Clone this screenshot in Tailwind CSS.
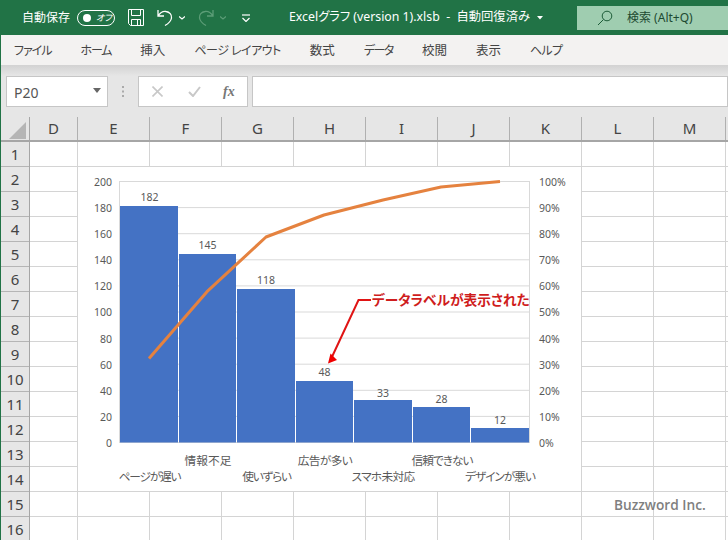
<!DOCTYPE html>
<html lang="ja">
<head>
<meta charset="utf-8">
<script src="https://cdn.jsdelivr.net/npm/@tailwindcss/browser@4"></script>
</head>
<body class="m-0 overflow-hidden bg-white">
<div class="relative flex h-[540px] w-[728px] flex-col overflow-hidden border-l border-[#217346] font-['Noto_Sans','Noto_Sans_CJK_JP',sans-serif] text-[#444] [font-feature-settings:'palt']">

  <!-- Title bar -->
  <div class="flex h-[35px] shrink-0 items-center bg-[#217346] pl-[21px] text-[12px] text-white">
    <span class="w-[55px]">自動保存</span>
    <div class="flex h-[16px] w-[38px] items-center rounded-full border-[1.5px] border-white pl-[5px]">
      <span class="h-[8px] w-[8px] rounded-full bg-white"></span>
      <span class="ml-[5px] text-[9px] leading-none italic">オフ</span>
    </div>
    <svg class="ml-[13px]" width="16" height="17" viewBox="0 0 16 17" fill="none" stroke="#fff" stroke-width="1"><path d="M.5.5h15v16H2.5l-2-2zM3.5.5v6h9v-6M3.5 16.500v-6h9v6M9.500 11v5"/></svg>
    <svg class="ml-[13px]" width="16" height="18" viewBox="0 0 16 18" fill="none" stroke="#fff" stroke-width="1.300"><path d="M1 1v6h6M1 7c2-3 5-5 8-4.500 3.500.5 6 3 5.500 6.500-.5 3-3 5.500-6.500 7.500"/></svg>
    <svg class="ml-[6px]" width="6" height="4" viewBox="0 0 6 4" fill="none" stroke="#fff" stroke-width="1.200"><path d="M0 .5l3 2.500L6 .5"/></svg>
    <svg class="ml-[13px]" width="16" height="18" viewBox="0 0 16 18" fill="none" stroke="#5c9d77" stroke-width="1.300"><path d="M15 1v6H9M15 7c-2-3-5-5-8-4.500C3.500 3 1 5.500 1.500 9c.5 3 3 5.500 6.500 7.500"/></svg>
    <svg class="ml-[6px]" width="6" height="4" viewBox="0 0 6 4" fill="none" stroke="#5c9d77" stroke-width="1.200"><path d="M0 .5l3 2.500L6 .5"/></svg>
    <svg class="ml-[16px]" width="8" height="8" viewBox="0 0 8 8" fill="none" stroke="#fff" stroke-width="1.200"><path d="M0 1h8"/><path d="M.5 4l3.500 3.500L7.500 4" /></svg>
    <span class="ml-[39px] w-[248px] text-[12.3px] whitespace-pre">Excelグラフ (version 1).xlsb  -  自動回復済み</span>
    <svg width="6" height="4" viewBox="0 0 6 4" fill="#fff"><path d="M0 0h6L3 3.500z"/></svg>
    <div class="mt-[1px] ml-[34px] flex h-[24px] flex-1 items-center bg-[#9fcdb0] pl-[20px] text-[#1d4a30]">
      <svg width="16" height="16" viewBox="0 0 16 16" fill="none" stroke="#1d5c38" stroke-width="1"><circle cx="10" cy="6" r="4.800"/><path d="M6.500 9.500L1 15"/></svg>
      <span class="ml-[14px]">検索 (Alt+Q)</span>
    </div>
  </div>

  <!-- Ribbon tabs -->
  <div class="flex h-[30px] shrink-0 items-center gap-[29px] bg-[#f3f2f1] pt-[2px] pl-[13px] text-[12px] text-[#444]">
    <span class="tracking-[-1px]">ファイル</span>
    <span class="tracking-[-1.2px]">ホーム</span>
    <span class="text-[12.5px]">挿入</span>
    <span class="tracking-[-0.5px]">ページ レイアウト</span>
    <span class="text-[12.5px]">数式</span>
    <span class="tracking-[-1.5px]">データ</span>
    <span class="text-[12.5px]">校閲</span>
    <span class="text-[12.5px]">表示</span>
    <span class="tracking-[-0.7px]">ヘルプ</span>
  </div>
  <div class="h-[11px] shrink-0 bg-gradient-to-b from-[#d2d2d2] to-[#e6e6e6]"></div>

  <!-- Formula bar -->
  <div class="flex h-[41px] shrink-0 items-start gap-[4px] bg-[#e6e6e6] pl-[5px]">
    <div class="flex h-[31px] w-[102px] items-center justify-between border border-[#c6c6c6] bg-white pt-[2px] pr-[6px] pl-[7px] text-[14px] text-[#555]">
      <span>P20</span>
      <svg class="mb-[4px]" width="8" height="5" viewBox="0 0 8 5" fill="#666"><path d="M0 0h8L4 5z"/></svg>
    </div>
    <div class="flex h-[31px] w-[22px] items-center justify-center">
      <svg width="2" height="11" viewBox="0 0 2 11" fill="#aaa"><path d="M0 0h2v2H0zM0 4.500h2v2H0zM0 9h2v2H0z"/></svg>
    </div>
    <div class="flex h-[31px] w-[110px] items-center border border-[#c6c6c6] bg-white pl-[13px]">
      <svg width="11" height="11" viewBox="0 0 11 11" fill="none" stroke="#c8c8c8" stroke-width="1.600"><path d="M.5.500l10 10M10.500.500l-10 10"/></svg>
      <svg class="ml-[25px]" width="13" height="11" viewBox="0 0 13 11" fill="none" stroke="#c8c8c8" stroke-width="2"><path d="M1 6l4 4 7-9"/></svg>
      <span class="ml-[22px] font-['Liberation_Serif',serif] text-[14px] leading-none font-bold text-[#777] italic">fx</span>
    </div>
    <div class="h-[31px] flex-1 border border-[#c6c6c6] bg-white"></div>
  </div>

  <!-- Column headers -->
  <div class="flex h-[25px] shrink-0 border-b-2 border-[#a6a6a6] bg-[#e6e6e6] text-center text-[15px] leading-[23px] text-[#444]">
    <div class="relative w-[29px] shrink-0 border-r border-[#a6a6a6]">
      <svg class="absolute top-[5px] left-[8px]" width="17" height="17" viewBox="0 0 17 17" fill="#b5b5b5"><path d="M17 0v17H0z"/></svg>
    </div>
    <div class="w-[48px] shrink-0 border-r border-[#b0b0b0]">D</div>
    <div class="w-[72px] shrink-0 border-r border-[#b0b0b0]">E</div>
    <div class="w-[72px] shrink-0 border-r border-[#b0b0b0]">F</div>
    <div class="w-[72px] shrink-0 border-r border-[#b0b0b0]">G</div>
    <div class="w-[72px] shrink-0 border-r border-[#b0b0b0]">H</div>
    <div class="w-[72px] shrink-0 border-r border-[#b0b0b0]">I</div>
    <div class="w-[72px] shrink-0 border-r border-[#b0b0b0]">J</div>
    <div class="w-[72px] shrink-0 border-r border-[#b0b0b0]">K</div>
    <div class="w-[72px] shrink-0 border-r border-[#b0b0b0]">L</div>
    <div class="w-[72px] shrink-0 border-r border-[#b0b0b0]">M</div>
    <div class="flex-1"></div>
  </div>

  <!-- Sheet -->
  <div class="flex min-h-0 flex-1">
    <div class="flex w-[29px] shrink-0 flex-col border-r border-[#a6a6a6] bg-[#e6e6e6] text-center text-[15px] leading-[24px] text-[#444]">
      <div class="h-[25px] shrink-0 border-b border-[#b5b5b5]">1</div>
      <div class="h-[25px] shrink-0 border-b border-[#b5b5b5]">2</div>
      <div class="h-[25px] shrink-0 border-b border-[#b5b5b5]">3</div>
      <div class="h-[25px] shrink-0 border-b border-[#b5b5b5]">4</div>
      <div class="h-[25px] shrink-0 border-b border-[#b5b5b5]">5</div>
      <div class="h-[25px] shrink-0 border-b border-[#b5b5b5]">6</div>
      <div class="h-[25px] shrink-0 border-b border-[#b5b5b5]">7</div>
      <div class="h-[25px] shrink-0 border-b border-[#b5b5b5]">8</div>
      <div class="h-[25px] shrink-0 border-b border-[#b5b5b5]">9</div>
      <div class="h-[25px] shrink-0 border-b border-[#b5b5b5]">10</div>
      <div class="h-[25px] shrink-0 border-b border-[#b5b5b5]">11</div>
      <div class="h-[25px] shrink-0 border-b border-[#b5b5b5]">12</div>
      <div class="h-[25px] shrink-0 border-b border-[#b5b5b5]">13</div>
      <div class="h-[25px] shrink-0 border-b border-[#b5b5b5]">14</div>
      <div class="h-[25px] shrink-0 border-b border-[#b5b5b5]">15</div>
      <div class="h-[25px] shrink-0 border-b border-[#b5b5b5]">16</div>
    </div>

    <div class="relative flex-1 bg-[linear-gradient(to_right,#d4d4d4_1px,transparent_1px),linear-gradient(to_bottom,transparent_24px,#d4d4d4_24px)] bg-[size:72px_100%,100%_25px] bg-[position:47px_0,0_0]">
      <!-- Chart -->
      <svg class="absolute top-[25px] left-[48px] bg-white" width="503" height="324" viewBox="78 167 503 324" font-family="'Noto Sans','Noto Sans CJK JP',sans-serif" font-size="10.500" fill="#595959">
        <g stroke="#d9d9d9" stroke-width="1">
          <path d="M119.500 181.500H529.500M119.500 207.600H529.500M119.500 233.700H529.500M119.500 259.800H529.500M119.500 285.900H529.500M119.500 312H529.500M119.500 338.100H529.500M119.500 364.200H529.500M119.500 390.300H529.500M119.500 416.400H529.500M119.500 442.500H529.500M119.500 181V443M529.500 181V443" fill="none"/>
        </g>
        <g fill="#4472c4">
          <rect x="120" y="206" width="58" height="236.500"/>
          <rect x="179" y="254" width="57" height="188.500"/>
          <rect x="237" y="289" width="58" height="153.500"/>
          <rect x="296" y="381" width="57" height="61.500"/>
          <rect x="354" y="400" width="58" height="42.500"/>
          <rect x="413" y="407" width="57" height="35.500"/>
          <rect x="471" y="428" width="58" height="14.500"/>
        </g>
        <polyline points="149,358.600 207,291.700 266,237 324,215 383,200 441,187 500,181.500" fill="none" stroke="#e5823f" stroke-width="3" stroke-linejoin="round"/>
        <g text-anchor="middle">
          <text x="149.500" y="201">182</text>
          <text x="207.500" y="249">145</text>
          <text x="266" y="284">118</text>
          <text x="324.500" y="376">48</text>
          <text x="383" y="397">33</text>
          <text x="441.500" y="403">28</text>
          <text x="500" y="424">12</text>
        </g>
        <g text-anchor="end">
          <text x="112" y="186">200</text>
          <text x="112" y="212">180</text>
          <text x="112" y="238">160</text>
          <text x="112" y="264">140</text>
          <text x="112" y="290">120</text>
          <text x="112" y="316">100</text>
          <text x="112" y="343">80</text>
          <text x="112" y="369">60</text>
          <text x="112" y="395">40</text>
          <text x="112" y="421">20</text>
          <text x="112" y="447">0</text>
        </g>
        <g>
          <text x="539" y="186">100%</text>
          <text x="539" y="212">90%</text>
          <text x="539" y="238">80%</text>
          <text x="539" y="264">70%</text>
          <text x="539" y="290">60%</text>
          <text x="539" y="316">50%</text>
          <text x="539" y="343">40%</text>
          <text x="539" y="369">30%</text>
          <text x="539" y="395">20%</text>
          <text x="539" y="421">10%</text>
          <text x="539" y="447">0%</text>
        </g>
        <g text-anchor="middle" font-size="11.700">
          <text x="208" y="465">情報不足</text>
          <text x="325" y="465" letter-spacing="-0.6">広告が多い</text>
          <text x="442" y="465" letter-spacing="-1">信頼できない</text>
          <text x="149.500" y="481" letter-spacing="-1.200">ページが遅い</text>
          <text x="266.500" y="481" letter-spacing="-1.200">使いずらい</text>
          <text x="383" y="481" letter-spacing="-0.7">スマホ未対応</text>
          <text x="500" y="481" letter-spacing="-1">デザインが悪い</text>
        </g>
        <path d="M371 300H358.500L331 359" fill="none" stroke="#e01414" stroke-width="2"/>
        <path d="M328 363.500L330.500 353.500L337 360z" fill="#f00000"/>
        <text x="372" y="305" font-size="13.700" font-weight="700" fill="#cf1d1d">データラベルが表示された</text>
      </svg>
    </div>
  </div>

  <!-- Watermark -->
  <span class="absolute top-[495px] left-[613px] font-['Open_Sans',sans-serif] text-[13.7px] font-semibold text-[#7f7f7f]">Buzzword Inc.</span>
</div>
</body>
</html>
